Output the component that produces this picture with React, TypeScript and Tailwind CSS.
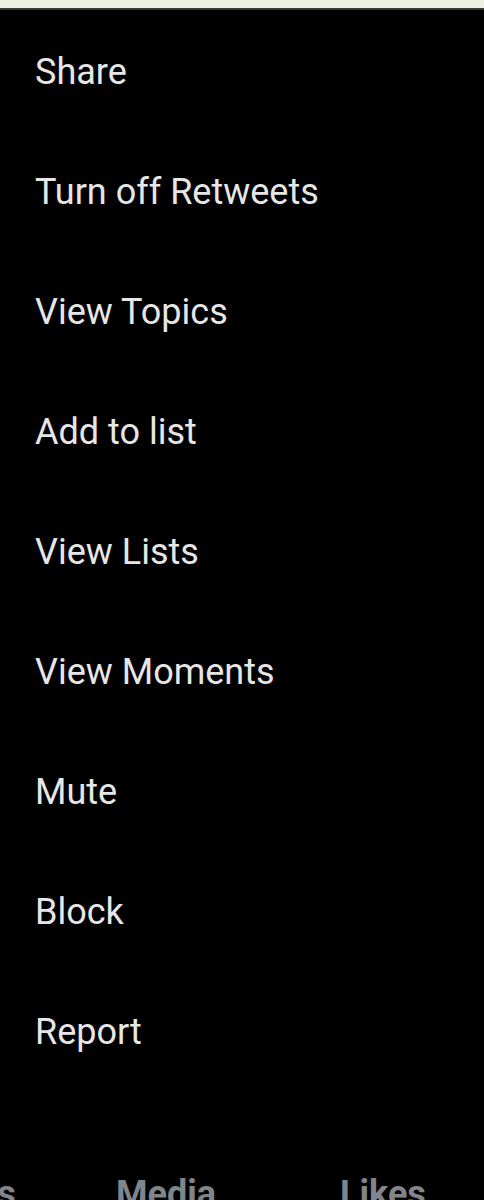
const items = ['Share', 'Turn off Retweets', 'View Topics', 'Add to list', 'View Lists', 'View Moments', 'Mute', 'Block', 'Report'];

export default function App() {
  return (
    <div className="w-[484px] h-[1200px] overflow-hidden bg-black font-['Roboto',sans-serif]">
      <div className="h-[8px] bg-[#eef0e2]" />
      <div className="h-[2px] bg-[#3a3a34]" />
      <ul className="pt-[2px]">
        {items.map(label => (
          <li key={label} className="h-[120px] flex items-center pl-[35px] text-[36px] text-[#e6e6e6]">
            {label}
          </li>
        ))}
      </ul>
      <div className="pt-[84px] flex items-start text-[36px] font-bold text-[#80858a] leading-none whitespace-nowrap">
        <span className="ml-[-15px] w-[131px]">ts</span>
        <span className="w-[224px]">Media</span>
        <span>Likes</span>
      </div>
    </div>
  );
}
